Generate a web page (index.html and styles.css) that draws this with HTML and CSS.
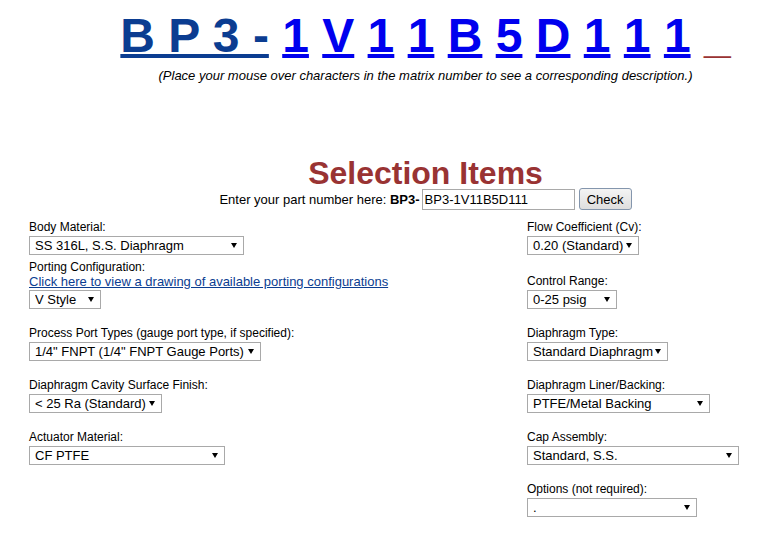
FILE: index.html
```html
<!DOCTYPE html>
<html lang="en">
<head>
    <meta charset="UTF-8" />
    <title>BP3 Part Number Builder</title>
    <link rel="stylesheet" href="styles.css">
</head>
<body>
    <div class="top">
        <div class="matrix">
            <a class="base" href="#">B P 3 -</a> <a href="#">1</a> <a href="#">V</a> <a href="#">1</a> <a href="#">1</a> <a href="#">B</a> <a href="#">5</a> <a href="#">D</a> <a href="#">1</a> <a href="#">1</a> <a href="#">1</a> <span class="tail">_</span>
        </div>
        <p class="hint">(Place your mouse over characters in the matrix number to see a corresponding description.)</p>

        <h1 class="title">Selection Items</h1>
        <form class="lookup" onsubmit="return false">
            <span>Enter your part number here: <b>BP3-</b></span>
            <input type="text" class="part" value="BP3-1V11B5D111" />
            <button type="button" class="check">Check</button>
        </form>
    </div>

    <div class="fields">
        <div class="row">
            <div class="field">
                <div class="lbl">Body Material:</div>
                <span class="pick"><select class="sel-body"><option>SS 316L, S.S. Diaphragm</option></select></span>
            </div>
            <div class="field">
                <div class="lbl">Flow Coefficient (Cv):</div>
                <span class="pick"><select class="sel-flow"><option>0.20 (Standard)</option></select></span>
            </div>
        </div>

        <div class="row tight">
            <div class="field">
                <div class="lbl">Porting Configuration:</div>
                <a class="drawing" href="#">Click here to view a drawing of available porting configurations</a>
                <span class="pick"><select class="sel-porting"><option>V Style</option></select></span>
            </div>
            <div class="field">
                <div class="lbl">Control Range:</div>
                <span class="pick"><select class="sel-range"><option>0-25 psig</option></select></span>
            </div>
        </div>

        <div class="row">
            <div class="field">
                <div class="lbl">Process Port Types (gauge port type, if specified):</div>
                <span class="pick"><select class="sel-ports"><option>1/4" FNPT (1/4" FNPT Gauge Ports)</option></select></span>
            </div>
            <div class="field">
                <div class="lbl">Diaphragm Type:</div>
                <span class="pick"><select class="sel-dtype"><option>Standard Diaphragm</option></select></span>
            </div>
        </div>

        <div class="row">
            <div class="field">
                <div class="lbl">Diaphragm Cavity Surface Finish:</div>
                <span class="pick"><select class="sel-finish"><option>&lt; 25 Ra (Standard)</option></select></span>
            </div>
            <div class="field">
                <div class="lbl">Diaphragm Liner/Backing:</div>
                <span class="pick"><select class="sel-liner"><option>PTFE/Metal Backing</option></select></span>
            </div>
        </div>

        <div class="row">
            <div class="field">
                <div class="lbl">Actuator Material:</div>
                <span class="pick"><select class="sel-actuator"><option>CF PTFE</option></select></span>
            </div>
            <div class="field">
                <div class="lbl">Cap Assembly:</div>
                <span class="pick"><select class="sel-cap"><option>Standard, S.S.</option></select></span>
            </div>
        </div>

        <div class="row">
            <div class="field"></div>
            <div class="field">
                <div class="lbl">Options (not required):</div>
                <span class="pick"><select class="sel-options"><option>.</option></select></span>
            </div>
        </div>
    </div>
</body>
</html>
```

FILE: styles.css
```css
body {
    margin: 8px;
    font-family: "Liberation Sans", Arial, sans-serif;
    color: #000;
    background: #fff;
}

/* part number header */
.top {
    padding-left: 80px;
    text-align: center;
}

.matrix {
    font-size: 48px;
    font-weight: bold;
    line-height: 56px;
    white-space: nowrap;
}

.matrix a {
    color: #0000ee;
    text-decoration-thickness: 4px;
    text-underline-offset: 2px;
}

.matrix a.base {
    color: #0b3d91;
}

.matrix .tail {
    color: #993333;
}

.hint {
    margin: 4px 0 0;
    font-size: 13px;
    font-style: italic;
    line-height: 15px;
}

.title {
    margin: 75px 0 0;
    font-size: 32px;
    line-height: 30px;
    font-weight: bold;
    color: #993333;
}

.lookup {
    display: flex;
    justify-content: center;
    align-items: center;
    height: 22px;
    font-size: 13px;
}

.part {
    box-sizing: border-box;
    width: 153px;
    height: 21px;
    margin: 0 0 0 2px;
    padding: 0 2px;
    border: 1px solid #a9a9a9;
    font-family: "Liberation Sans", Arial, sans-serif;
    font-size: 13px;
    color: #000;
}

.check {
    box-sizing: border-box;
    width: 53px;
    height: 22px;
    margin-left: 4px;
    padding: 0;
    border: 1px solid #8496ad;
    border-radius: 3px;
    background: linear-gradient(#f4f4f4, #dedede);
    font-family: "Liberation Sans", Arial, sans-serif;
    font-size: 13px;
    color: #000;
}

/* selection fields */
.fields {
    margin-top: 10px;
    padding-left: 21px;
}

.row {
    display: grid;
    grid-template-columns: 498px auto;
    align-items: end;
    margin-top: 17px;
}

.row:first-child {
    margin-top: 0;
}

.row.tight {
    margin-top: 5px;
}

.field {
    display: flex;
    flex-direction: column;
    align-items: flex-start;
}

.lbl {
    font-size: 12px;
    line-height: 15px;
}

.drawing {
    font-size: 13px;
    line-height: 14px;
    color: #0b3d91;
}

.pick {
    position: relative;
    display: inline-block;
    margin-top: 1px;
}

.pick::after {
    content: "";
    position: absolute;
    right: 7px;
    top: 7px;
    border-top: 5px solid #000;
    border-left: 3px solid transparent;
    border-right: 3px solid transparent;
    pointer-events: none;
}

select {
    -webkit-appearance: none;
    appearance: none;
    box-sizing: border-box;
    display: block;
    height: 19px;
    margin: 0;
    padding: 0 12px 0 5px;
    border: 1px solid #a9a9a9;
    border-radius: 0;
    background: #fff;
    font-family: "Liberation Sans", Arial, sans-serif;
    font-size: 13px;
    line-height: 17px;
    color: #000;
}

.sel-body { width: 215px; }
.sel-porting { width: 72px; }
.sel-ports { width: 232px; }
.sel-finish { width: 133px; }
.sel-actuator { width: 196px; }
.sel-flow { width: 112px; }
.sel-range { width: 90px; }
.sel-dtype { width: 141px; }
.sel-liner { width: 183px; }
.sel-cap { width: 212px; }
.sel-options { width: 170px; }
```
